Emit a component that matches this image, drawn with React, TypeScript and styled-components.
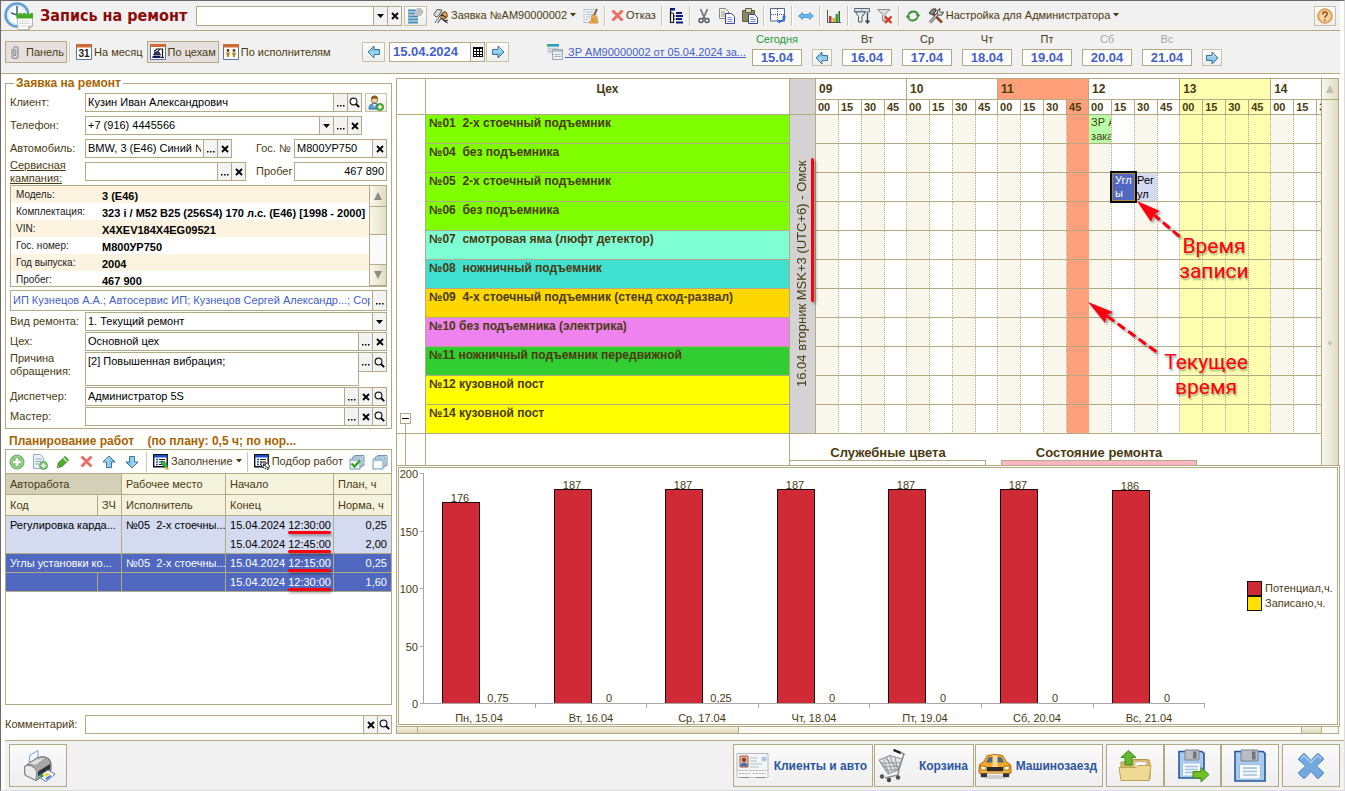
import React from "react";
import styled, { createGlobalStyle, css } from "styled-components";

const UI = `"Liberation Sans", Arial, sans-serif`;
const HEAD = `"DejaVu Sans Condensed", "DejaVu Sans", sans-serif`;
const LINE = "#b3a983";
const INK = "#4a3a10";
const BLUE = "#4560c8";
const BAR = "#f1f1f1";
const RED = "#fa0010";

const GlobalStyle = createGlobalStyle`
  * { box-sizing: border-box; }
  body { margin: 0; background: #fff; font-family: ${UI}; font-size: 11px; line-height: 15px; color: ${INK}; }
  button, input, select, textarea { font: inherit; color: inherit; margin: 0; padding: 0; border-radius: 0; }
  button { cursor: pointer; }
  svg { display: block; flex: none; }
`;

/* ---------- page frame ---------- */

const Page = styled.div`
  min-height: 100vh;
  display: flex;
  flex-direction: column;
  border: 1px solid #dcdcdc;
  border-top-color: #6e6a6c;
  border-left-color: #6e6a6c;
`;

const TopBar = styled.header`
  display: flex;
  align-items: center;
  height: 30px;
  margin-right: 4px;
  padding: 0 4px 0 3px;
  background: ${BAR};
  border-bottom: 1px solid ${LINE};
`;

const Title = styled.h1`
  margin: 0 5px 0 7px;
  width: 151px;
  font: bold 16px/20px ${HEAD};
  color: #8b0a0a;
  white-space: nowrap;
`;

const Tools = styled.div`
  flex: 1;
  display: flex;
  align-items: center;
  gap: 1px;
  margin-left: 3px;
`;

const Separator = styled.span`
  width: 2px;
  height: 20px;
  margin: 0 1px;
  background: #cfc8ac;
  border-right: 1px solid #fff;
`;

const ToolButton = styled.button<{ $on?: boolean }>`
  display: flex;
  align-items: center;
  justify-content: center;
  gap: 2px;
  min-width: 22px;
  height: 22px;
  padding: 0 2px;
  border: 1px solid ${(p) => (p.$on ? LINE : "transparent")};
  background: ${(p) => (p.$on ? "#e6e0e0" : "transparent")};
  white-space: nowrap;
`;

const RaisedButton = styled.button<{ $w: number; $h: number }>`
  display: flex;
  align-items: center;
  justify-content: center;
  width: ${(p) => p.$w}px;
  height: ${(p) => p.$h}px;
  border: 1px solid #c9c2a6;
  background: linear-gradient(#fdfdfd, #eeeeec);
`;

const NavBar = styled.nav`
  display: flex;
  align-items: center;
  height: 43px;
  margin-right: 4px;
  padding-left: 4px;
  background: ${BAR};
  border-bottom: 1px solid ${LINE};
`;

const ViewTabs = styled.div`
  display: flex;
  align-items: center;
  gap: 1px;
  width: 357px;
`;

const DateField = styled.div`
  display: flex;
  width: 96px;
  height: 20px;
  margin-left: 4px;
  margin-right: 1px;
  border: 1px solid ${LINE};
  background: #fff;
`;

const DateInput = styled.input`
  && {
    flex: 1;
    min-width: 0;
    border: 0;
    padding-left: 3px;
    background: none;
    font: bold 13px/16px ${UI};
    color: ${BLUE};
  }
`;

const DocLink = styled.a`
  display: flex;
  align-items: center;
  gap: 2px;
  width: 205px;
  margin-left: 38px;
  color: ${BLUE};
  white-space: pre;
`;

const Week = styled.div`
  display: flex;
  align-items: flex-end;
  align-self: flex-start;
  gap: 10px;
  margin-top: 1px;
`;

const Day = styled.div<{ $tone?: string }>`
  width: 50px;
  height: 34px;
  text-align: center;
  color: ${(p) => p.$tone || INK};
`;

const DayButton = styled.button`
  && {
    display: block;
    width: 50px;
    height: 17px;
    margin-top: 2px;
    border: 1px solid ${LINE};
    background: #fff;
    font: bold 13px/15px ${UI};
    color: ${BLUE};
  }
`;

/* ---------- form ---------- */

const Main = styled.main`
  flex: 1;
  display: flex;
  min-height: 0;
`;

const Side = styled.section`
  display: flex;
  flex-direction: column;
  width: 387px;
  flex: none;
  margin: 1px 4px 6px 4px;
`;

const Group = styled.fieldset`
  margin: 0;
  min-width: 0;
  padding: 2px 4px;
  border: 1px solid ${LINE};
`;

const heading = css`
  font: bold 12px/16px ${UI};
  color: #a86400;
`;

const Legend = styled.legend`
  ${heading}
  margin-left: 4px;
  padding: 0 2px;
`;

const Row = styled.div<{ $gap: number }>`
  display: flex;
  align-items: flex-start;
  margin-bottom: ${(p) => p.$gap}px;
`;

const Label = styled.label<{ $w: number; $link?: boolean; $double?: boolean }>`
  width: ${(p) => p.$w}px;
  flex: none;
  line-height: ${(p) => (p.$double ? 13 : 19)}px;
  height: 19px;
  margin-top: ${(p) => (p.$link ? -3 : 0)}px;
  text-decoration: ${(p) => (p.$link ? "underline" : "none")};
  white-space: ${(p) => (p.$double ? "normal" : "nowrap")};
`;

const Field = styled.div<{ $w?: number; $h?: number; $mr?: number }>`
  display: flex;
  min-width: 0;
  ${(p) => (p.$w ? `width: ${p.$w}px; flex: none;` : "flex: 1;")}
  height: ${(p) => p.$h || 19}px;
  margin-right: ${(p) => p.$mr || 0}px;
  border: 1px solid ${LINE};
  background: #fff;
  color: #000;
`;

const entry = css`
  flex: 1;
  min-width: 0;
  border: 0;
  outline: 0;
  padding: 0 2px;
  background: none;
`;

const Input = styled.input<{ $right?: boolean; $blue?: boolean }>`
  && {
    ${entry}
    text-align: ${(p) => (p.$right ? "right" : "left")};
    color: ${(p) => (p.$blue ? BLUE : "#000")};
  }
`;

const Select = styled.select`
  && {
    ${entry}
    appearance: none;
  }
`;

const Area = styled.textarea`
  && {
    ${entry}
    height: 34px;
    padding: 1px 2px;
    border: 1px solid ${LINE};
    resize: none;
    overflow: hidden;
    color: #000;
  }
`;

const MiniButton = styled.button`
  && {
    display: flex;
    align-items: center;
    justify-content: center;
    flex: none;
    width: 14px;
    border: 0;
    border-left: 1px solid ${LINE};
    background: #f3f3f3;
    color: #000;
  }
`;

const AreaButtons = styled.div`
  display: flex;
  width: 28px;
  height: 20px;
  border: solid ${LINE};
  border-width: 1px 1px 1px 0;

  && > :first-child {
    border-left: 0;
    width: 13px;
  }
`;

const InfoBox = styled.div`
  display: flex;
  height: 102px;
  margin-bottom: 3px;
  border: 1px solid ${LINE};
  overflow: hidden;
`;

const InfoTable = styled.table`
  flex: 1;
  border-collapse: collapse;
  font: 10px/12px ${UI};
  color: #222;

  tr:nth-child(odd) { background: #fdf3e1; }
  th { width: 85px; height: 17px; padding: 1px 0 0 5px; text-align: left; font-weight: normal; }
  td { padding: 2px 0 0 6px; font-weight: bold; font-size: 11px; color: #000; white-space: nowrap; }
`;

const Scroll = styled.div<{ $w: number }>`
  width: ${(p) => p.$w}px;
  flex: none;
  display: flex;
  flex-direction: column;
  background: #fafafa;
  border-left: 1px solid ${LINE};
`;

const ScrollArrow = styled.button<{ $h: number }>`
  display: flex;
  align-items: center;
  justify-content: center;
  flex: none;
  width: 100%;
  height: ${(p) => p.$h}px;
  border: 0;
  border-bottom: 1px solid ${LINE};
  background: linear-gradient(90deg, #f9f8ee, #e0dbc2);
`;

const ScrollThumb = styled.div`
  flex: 0 0 28px;
  background: linear-gradient(90deg, #f8f6ea, #e4dfc4);
  border-bottom: 1px solid ${LINE};
`;

const ScrollGap = styled.div`
  flex: 1;
  border-bottom: 1px solid ${LINE};
`;

const ScrollBody = styled.div`
  flex: 1;
  display: flex;
  align-items: center;
  justify-content: center;
  padding-top: 120px;
  background: linear-gradient(90deg, #f9f8ee, #e0dbc2);

  &::after {
    content: "";
    width: 4px;
    height: 4px;
    border-radius: 2px;
    background: #c9c4b0;
  }
`;

/* ---------- work planning ---------- */

const PlanTitle = styled.h2`
  ${heading}
  margin: 0;
  padding: 4px 4px 0;
  height: 20px;
  white-space: pre;
`;

const PlanBox = styled.div`
  flex: 1;
  border: 1px solid ${LINE};
  margin-bottom: 10px;
`;

const PlanTools = styled.div`
  display: flex;
  align-items: center;
  gap: 1px;
  height: 24px;
  border-bottom: 1px solid ${LINE};

  ${Separator} {
    margin: 0 2px;
  }
`;

const PlanTable = styled.table`
  width: 100%;
  table-layout: fixed;
  border-collapse: separate;
  border-spacing: 0;

  th, td {
    height: 19px;
    padding: 0 4px;
    border-right: 1px solid ${LINE};
    border-bottom: 1px solid ${LINE};
    text-align: left;
    font-weight: normal;
    white-space: pre;
  }
  th { height: 21px; background: #f5f2de; }
  th.current { background: #d3cfb9; }
  th:last-child, td:last-child { border-right: 0; }
  td.num { text-align: right; }
`;

const WorkRow = styled.tr<{ $selected?: boolean; $open?: boolean }>`
  background: ${(p) => (p.$selected ? "#5068c0" : "#d4daf0")};
  color: ${(p) => (p.$selected ? "#fff" : "#000")};

  && td { border-bottom-color: ${(p) => (p.$open ? "transparent" : LINE)}; }
`;

const Marked = styled.span`
  position: relative;

  &::after {
    content: "";
    position: absolute;
    left: 0;
    right: 0;
    bottom: -3px;
    height: 3px;
    border-radius: 2px;
    background: ${RED};
    box-shadow: 1px 2px 3px rgba(0, 0, 0, 0.35);
  }
`;

/* ---------- schedule ---------- */

const Board = styled.section`
  flex: 1;
  min-width: 0;
  display: flex;
  flex-direction: column;
  margin: 4px 4px 6px 0;
`;

const Sheet = styled.div`
  position: relative;
  flex: 1 1 386px;
  min-height: 0;
  display: flex;
  margin-right: 1px;
  border: 1px solid ${LINE};
  border-bottom: 0;
  overflow: hidden;
`;

const SheetView = styled.div`
  flex: 1 1 0;
  min-width: 0;
  overflow: hidden;
  display: flex;
  flex-direction: column;
`;

const Schedule = styled.table`
  width: 1014px;
  flex: none;
  table-layout: fixed;
  border-collapse: separate;
  border-spacing: 0;
  font: 11px/14px ${UI};

  th, td {
    padding: 0;
    border-right: 1px solid ${LINE};
    border-bottom: 1px solid ${LINE};
    text-align: left;
    vertical-align: top;
    overflow: hidden;
  }
`;

const ShopHead = styled.th`
  && { text-align: center; font: bold 12px/20px ${UI}; }
`;

const HourHead = styled.th<{ $bg: string }>`
  && { height: 21px; padding-left: 3px; background: ${(p) => p.$bg}; font: bold 12px/20px ${UI}; }
`;

const MinuteHead = styled.th<{ $bg: string }>`
  && { height: 15px; padding-left: 2px; background: ${(p) => p.$bg}; font: bold 11px/14px ${UI}; white-space: nowrap; }
`;

const ShopCell = styled.th<{ $bg: string }>`
  && { height: 29px; padding: 1px 0 0 3px; background: ${(p) => p.$bg}; font: bold 12px/15px ${UI}; white-space: pre; }
`;

const ZoneCell = styled.td`
  && { background: #d3d3d3; vertical-align: middle; }
`;

const ZoneText = styled.div`
  display: flex;
  align-items: center;
  justify-content: center;
  height: 318px;
  writing-mode: vertical-rl;
  transform: rotate(180deg);
  font: 13px/23px ${UI};
  white-space: nowrap;
`;

const ZoneMark = styled.span`
  position: absolute;
  left: 414px;
  top: 79px;
  width: 3px;
  height: 144px;
  border-radius: 2px;
  background: ${RED};
  box-shadow: 2px 2px 3px rgba(0, 0, 0, 0.35);
`;

const GutterCell = styled.td`
  && { vertical-align: bottom; }
`;

const Fold = styled.div`
  display: flex;
  flex-direction: column;
  align-items: center;
  width: 11px;
  margin-left: 3px;
`;

const FoldButton = styled.button`
  display: flex;
  align-items: center;
  justify-content: center;
  width: 11px;
  height: 11px;
  border: 1px solid ${LINE};
  background: #fff;
`;

const FoldLine = styled.span<{ $h?: number }>`
  width: 1px;
  ${(p) => (p.$h ? `height: ${p.$h}px;` : "flex: 1;")}
  background: ${LINE};
`;

const Slot = styled.td<{ $bg: string }>`
  && {
    background: ${(p) => p.$bg};
    border-right-style: dotted;
    ${(p) => p.$bg === "#ffa07a" && "border-right-color: #ffa07a;"}
  }
`;

const ActiveSlot = styled(Slot)`
  && { overflow: visible; }
`;

const Booking = styled.div<{ $kind: "done" | "active" | "plain" }>`
  height: 28px;
  padding-left: 2px;
  overflow: hidden;
  word-break: break-all;
  ${(p) => p.$kind === "done" && "background: #b8ffa8; white-space: pre;"}
  ${(p) => p.$kind === "plain" && "background: #d4daf0; color: #000;"}
  ${(p) =>
    p.$kind === "active" &&
    "position: relative; width: 23px; padding-left: 2px; background: #5068c0; color: #fff; border: 1px solid #b08a3a; box-shadow: 0 0 0 2px #0a0a14; line-height: 13px;"}
`;

const Below = styled.div`
  flex: 1;
  display: flex;
`;

const BelowCell = styled.div<{ $w: number }>`
  width: ${(p) => p.$w}px;
  flex: none;
  display: flex;
  border-right: 1px solid ${LINE};
`;

const Key = styled.div<{ $bg: string }>`
  width: 196px;
  margin-right: 15px;
  flex: none;
  display: flex;
  flex-direction: column;
  padding-top: 11px;
  text-align: center;
  font: bold 13px/15px ${UI};

  &::after {
    content: "";
    flex: 1;
    background: ${(p) => p.$bg};
    border: 1px solid ${LINE};
    border-left-width: ${(p) => (p.$bg === "#fff" ? 0 : 1)}px;
    border-bottom: 0;
  }
`;

const Note = styled.p<{ $x: number; $y: number }>`
  position: absolute;
  left: ${(p) => p.$x}px;
  top: ${(p) => p.$y}px;
  margin: 0;
  width: 100px;
  text-align: center;
  font: 21px/25px Roboto, sans-serif;
  color: ${RED};
  text-shadow: 1px 2px 2px rgba(0, 0, 0, 0.35);
`;

const Arrows = styled.svg`
  position: absolute;
  left: 690px;
  top: 120px;
  filter: drop-shadow(2px 2px 1px rgba(0, 0, 0, 0.35));
`;

const ChartPanel = styled.div`
  flex: none;
  display: flex;
  justify-content: space-between;
  border: 3px double ${LINE};
  background: #fff;
`;

const Legends = styled.ul`
  list-style: none;
  align-self: center;
  width: 90px;
  margin: 0;
  padding: 0;
`;

const LegendItem = styled.li<{ $c: string }>`
  display: flex;
  align-items: center;
  gap: 3px;
  white-space: nowrap;

  &::before {
    content: "";
    flex: none;
    width: 13px;
    height: 13px;
    background: ${(p) => p.$c};
    border: 1px solid #111;
  }
`;

const HScroll = styled.div`
  display: flex;
  height: 7px;
  margin-right: 1px;
  border: solid ${LINE};
  border-width: 0 1px 1px;
  background: #faf9f3;
`;

const HPart = styled.span<{ $w: number; $auto?: boolean }>`
  width: ${(p) => p.$w}px;
  margin-left: ${(p) => (p.$auto ? "auto" : 0)};
  margin-right: ${(p) => (p.$auto ? "16px" : 0)};
  border-right: 1px solid ${LINE};
  border-left: ${(p) => (p.$auto ? `1px solid ${LINE}` : 0)};
  background: linear-gradient(#f5f2de, #ddd8ba);
`;

/* ---------- footer ---------- */

const Footer = styled.footer`
  display: flex;
  align-items: center;
  height: 50px;
  margin-left: 4px;
  padding: 0 4px;
  background: ${BAR};
  border-top: 1px solid ${LINE};
`;

const BigButton = styled.button<{ $w: number; $mr?: number }>`
  && {
    display: flex;
    align-items: center;
    justify-content: ${(p) => (p.$w > 60 ? "space-between" : "center")};
    width: ${(p) => p.$w}px;
    height: 43px;
    margin-right: ${(p) => p.$mr || 0}px;
    padding: 0 ${(p) => (p.$w > 60 ? "5px 0 2px" : "0")};
    border: 1px solid ${LINE};
    background: linear-gradient(#fafafa, #efefef);
    font: bold 12px/16px ${UI};
    color: #2a55a0;
    white-space: nowrap;
  }
`;

const Spacer = styled.span`
  flex: 1;
`;

/* ---------- icons ---------- */

const Ic = ({ s = 16, children }: { s?: number; children: React.ReactNode }) => (
  <svg width={s} height={s} viewBox={`0 0 ${s} ${s}`} aria-hidden="true">{children}</svg>
);

const Caret = () => (
  <svg width="7" height="4" viewBox="0 0 7 4" aria-hidden="true"><path d="M0 0h7L3.500 4z" fill="currentColor" /></svg>
);
const MenuCaret = () => (
  <svg width="7" height="5" viewBox="0 0 7 5" aria-hidden="true"><path d="M1 0h6L4 3.500z" fill="currentColor" /></svg>
);
const Cross = () => (
  <svg width="8" height="8" viewBox="0 0 8 8" aria-hidden="true"><path d="M1 1l6 6M7 1L1 7" stroke="#000" strokeWidth="1.800" /></svg>
);
const Dots = () => (
  <svg width="8" height="8" viewBox="0 0 8 8" aria-hidden="true"><path d="M0 6h1.500v1.500H0zM3 6h1.500v1.500H3zM6 6h1.500v1.500H6z" fill="#000" /></svg>
);
const Lens = () => (
  <svg width="11" height="11" viewBox="0 0 11 11" aria-hidden="true">
    <circle cx="4.500" cy="4.500" r="3.400" fill="#fff" stroke="#222" strokeWidth="1.200" />
    <path d="M7 7l3.200 3.200" stroke="#000" strokeWidth="1.800" />
  </svg>
);
const Grid = () => (
  <svg width="10" height="10" viewBox="0 0 10 10" aria-hidden="true">
    <path d="M0 0h10v10H0z" />
    <path d="M1 2h2v2H1zM4 2h2v2H4zM7 2h2v2H7zM1 5h2v2H1zM4 5h2v2H4zM7 5h2v2H7zM1 8h2v1H1zM4 8h2v1H4zM7 8h2v1H7z" fill="#fff" />
  </svg>
);
const Tri = ({ up, faint }: { up?: boolean; faint?: boolean }) => (
  <svg width="8" height="8" viewBox="0 0 8 8" aria-hidden="true">
    <path d={up ? "M4 0l4 8H0z" : "M4 8l4-8H0z"} fill={faint ? "#c2beb0" : "#8f8c82"} />
  </svg>
);
const ArrowIcon = ({ dir }: { dir: "left" | "right" | "up" | "down" }) => {
  const turn = { right: 0, down: 90, left: 180, up: 270 }[dir];
  return (
    <Ic s={14}>
      <defs>
        <linearGradient id={`ar-${dir}`} x1="0" y1="0" x2="0" y2="1">
          <stop offset="0" stopColor="#c5ecfb" />
          <stop offset="1" stopColor="#5db0de" />
        </linearGradient>
      </defs>
      <path transform={`rotate(${turn} 7 7)`} d="M1.500 4.500H7V1l6 6-6 6V9.500H1.500z" fill={`url(#ar-${dir})`} stroke="#3f7096" />
    </Ic>
  );
};
const ClockCalendar = () => (
  <Ic s={29}>
    <circle cx="13" cy="14" r="11.500" fill="#e9f4fc" stroke="#5d9fd4" strokeWidth="2.500" />
    <circle cx="13" cy="14" r="9.300" fill="#f8fcff" stroke="#bcd8ee" strokeWidth=".8" />
    <path d="M13 5v9l-6-2M13 14l4 3" stroke="#465e78" strokeWidth="1.500" fill="none" />
    <path d="M13 14h15.500v11l-4 3.500H14z" fill="#fff" stroke="#aaa" strokeWidth=".8" />
    <path d="M12.500 12h16.500v5.500H12.500z" fill="#45a828" />
    <path d="M15 11v2.500M18.500 11v2.500M22 11v2.500M25.500 11v2.500" stroke="#d6e9d0" />
    <path d="M15.500 20h11M15.500 22.500h11M15.500 25h8" stroke="#bbb" strokeDasharray="1.500 1" />
    <path d="M24.500 28.500V25h4z" fill="#d5d5d5" stroke="#999" strokeWidth=".6" />
  </Ic>
);
const ListGear = () => (
  <Ic s={17}>
    <path d="M2 3.500h7M2 6.500h6M2 9.500h9M2 12.500h9M2 15.500h9" stroke="#4a8ab8" strokeWidth="1.800" />
    <path d="M1.500 2v15" stroke="#7eb3d6" />
    <circle cx="12" cy="5" r="3.200" fill="#e6e6e6" stroke="#a8a8a8" strokeWidth="1.800" strokeDasharray="1.700 .8" />
    <circle cx="12" cy="5" r="1.300" fill="#fff" stroke="#999" />
  </Ic>
);
const WrenchHand = () => (
  <Ic>
    <path d="M.8 6.500L4 1.500l5 .5-3.500 6-2.500 1z" fill="#dcdcdc" stroke="#555" />
    <path d="M2 14.500L10.500 4M4.500 15L13 4" stroke="#444" strokeWidth="1.100" />
    <path d="M3 14L11.500 4" stroke="#e4e4e4" />
    <path d="M8 8l3-4.500 2.500 1 1 4-2.500 2.500-4-.5z" fill="#eda24e" stroke="#5d3a10" strokeWidth=".9" />
    <path d="M9 11l5.500 4M8 6.500l5.500 3M11 13l4-1" stroke="#222" strokeWidth="1.100" />
  </Ic>
);
const Broom = () => (
  <Ic>
    <path d="M1 1.500h12v13H1z" fill="#eef5fb" stroke="#b2c6d6" />
    <path d="M3 4h7M3 6.500h5M3 9h4M3 11.500h2" stroke="#a9bfd2" />
    <path d="M14 1l-3 6" stroke="#8b5a22" strokeWidth="1.800" />
    <path d="M9 6.500l4.500 2 1.500 6.500H6q3-3 3-8.500z" fill="#f0b851" stroke="#cf933c" />
    <path d="M9 14l1.500-5M12 14.500l0-4.500" stroke="#c98b2a" />
  </Ic>
);
const RedX = () => (
  <svg width="13" height="13" viewBox="0 0 13 13" aria-hidden="true">
    <path d="M1 2.500L2.500 1l4 4 4-4L12 2.500l-4 4 4 4-1.500 1.500-4-4-4 4L1 10.500l4-4z" fill="#ee7064" stroke="#d9584c" strokeWidth=".8" />
  </svg>
);
const Tree = () => (
  <Ic>
    <path d="M2 0h5v2.500H2zM8 4h6v2H8zM8 7h7v2H8zM8 10h6v2H8zM8 13.500h7v2H8z" fill="#0a1a80" />
    <path d="M2.500 2v12.500H6M2.500 5H5" fill="none" stroke="#111" strokeWidth="1.200" />
    <path d="M5.500 5v10M5.500 8h2M5.500 11h2" stroke="#111" />
  </Ic>
);
const Scissors = () => (
  <Ic>
    <path d="M4.500 1l4.500 10M11.500 1L7 11" stroke="#6d7278" strokeWidth="1.700" />
    <circle cx="5" cy="12.500" r="2" fill="none" stroke="#54595f" strokeWidth="1.500" />
    <circle cx="11" cy="12.500" r="2" fill="none" stroke="#54595f" strokeWidth="1.500" />
  </Ic>
);
const Copy = () => (
  <Ic>
    <path d="M.5.5h6l3 3v7h-9z" fill="#f2f0e6" stroke="#8c897a" />
    <path d="M2 4h4M2 6h5M2 8h5" stroke="#a09c88" />
    <path d="M6.500 5.500h6l3 3v7h-9z" fill="#fff" stroke="#34449c" />
    <path d="M8.500 9.500h4M8.500 11.500h5M8.500 13.500h5" stroke="#7b88c8" />
  </Ic>
);
const Paste = () => (
  <Ic>
    <path d="M.5 2.500h12v11H.5z" fill="#8a8a60" stroke="#606040" />
    <path d="M3.500.5h6v4h-6z" fill="#d6d4bb" stroke="#606040" />
    <path d="M6.500 6.500h6l3 3v6h-9z" fill="#fff" stroke="#34449c" />
    <path d="M8.500 9.500h3M8.500 11.500h5M8.500 13.500h5" stroke="#7b88c8" />
  </Ic>
);
const GridSync = () => (
  <Ic>
    <path d="M.5.5h14v12.500H.5z" fill="#f8f9fc" stroke="#5a6480" />
    <path d="M7.500 1v12M1 6.500h13" stroke="#5a6480" strokeDasharray="1 1" />
    <path d="M14 9q0 4.500-5 4.500" stroke="#1e62d8" strokeWidth="1.500" fill="none" />
    <path d="M14 6.500l2 3h-4zM7 13.500l3-2v4z" fill="#1e62d8" />
  </Ic>
);
const Stretch = () => (
  <Ic>
    <path d="M.5 8L4.500 4.500v2h7v-2l4 3.500-4 3.500v-2h-7v2z" fill="#6cb6f0" stroke="#3f8fd2" strokeWidth=".8" />
  </Ic>
);
const Bars = () => (
  <Ic>
    <path d="M1.500 2v12.500H15" fill="none" stroke="#555" />
    <path d="M3 8h2.500v6H3z" fill="#c03a2e" />
    <path d="M6.500 10H9v4H6.500z" fill="#d8b320" />
    <path d="M9.500 6H12v8H9.500z" fill="#3b9a3a" />
    <path d="M12.500 3H14v11h-1.500z" fill="#276b2a" />
  </Ic>
);
const FilterCog = () => (
  <Ic>
    <path d="M.5.500h15v3.500h-15z" fill="#dce2ea" stroke="#5c6674" />
    <path d="M1.500 4h9.500L8 8.500V14H4.500V8.500z" fill="#e9edf2" stroke="#4c5664" />
    <path d="M13.500 5v10M11.500 12.500l2 2.500 2-2.500" fill="none" stroke="#38424e" strokeWidth="1.300" />
    <path d="M7 2l4 3-2 3" fill="#c4d0de" stroke="#4c5664" strokeWidth=".8" />
  </Ic>
);
const FilterX = () => (
  <Ic>
    <path d="M.5 1.500h12.500L8 6.500V13H5.500V6.500z" fill="#dcdcdc" stroke="#8a8a8a" />
    <path d="M8 8.500l6.500 6.500M14.500 8.500L8 15" stroke="#dc2c22" strokeWidth="2.200" />
  </Ic>
);
const Refresh = () => (
  <Ic>
    <path d="M3.500 6.500Q5 3.500 8.500 3.500T13 7M12.500 9.500Q11 12.500 7.500 12.500T3 9" fill="none" stroke="#3a9437" strokeWidth="1.800" />
    <path d="M15.500 6.500h-5L13 10zM.5 9.500h5L3 6z" fill="#3a9437" />
  </Ic>
);
const HammerWrench = () => (
  <Ic>
    <path d="M4 4.500l10 10" stroke="#8b4a1c" strokeWidth="2.600" />
    <path d="M1 5l3.500-4H8v2L4 7z" fill="#888" stroke="#333" />
    <path d="M2 14.500l8-9" stroke="#555" strokeWidth="3" />
    <path d="M2 14.500l8-9" stroke="#ccc" strokeWidth="1.200" />
    <path d="M9 5.500q0-4 3-5l-.5 2.500L13 4.500l2.500-.5q-.5 3.500-4 3.500z" fill="#d2d5d8" stroke="#444" />
  </Ic>
);
const Help = () => (
  <Ic>
    <circle cx="8" cy="8" r="7.200" fill="#f5b36a" stroke="#cf8a3e" />
    <circle cx="8" cy="8" r="5.500" fill="#fbe3c0" opacity=".7" />
    <path d="M5.800 6.500q0-2.500 2.200-2.500t2.200 2q0 1-1.200 1.800T8 9.800M8 11.200v1.500" fill="none" stroke="#8b4a14" strokeWidth="1.400" />
  </Ic>
);
const Clip = () => (
  <Ic>
    <path d="M4 5v6.500a3 3 0 0 0 6 0V4a2.200 2.200 0 0 0-4.200 0v6.500a1 1 0 0 0 2 0V5" fill="none" stroke="#888" strokeWidth="1.100" />
  </Ic>
);
const MonthIcon = () => (
  <Ic>
    <path d="M.5 1h15v14.500H.5z" fill="#fff" stroke="#5577a5" />
    <path d="M0 0h16v3.500H0z" fill="#cf6a34" />
    <text x="8" y="13" textAnchor="middle" fontFamily="Liberation Sans" fontWeight="bold" fontSize="10" fill="#222">31</text>
  </Ic>
);
const LiftIcon = () => (
  <Ic>
    <path d="M.5 1h15v14.500H.5z" fill="#fff" stroke="#5577a5" />
    <path d="M0 0h16v3H0z" fill="#cf6a34" />
    <path d="M2.500 12h8v2h-8z" fill="#15155a" />
    <path d="M3.500 11l1.500-3h4l1.500 3z" fill="#3a3a8a" stroke="#111" strokeWidth=".8" />
    <path d="M4 7.500l3-2.500h5M7.500 8l2-2.500M12.500 4.500v8.500M10.500 13.500h3.500" stroke="#111" strokeWidth="1.200" fill="none" />
  </Ic>
);
const StaffIcon = () => (
  <Ic>
    <path d="M.5 1h15v14.500H.5z" fill="#fff" stroke="#5577a5" />
    <path d="M0 0h16v3.500H0z" fill="#cf6a34" />
    <circle cx="5" cy="6.500" r="1.400" fill="#5a430c" />
    <circle cx="11" cy="6.500" r="1.400" fill="#5a430c" />
    <path d="M3 8.500h4L5.800 13h-1.600zM9 8.500h4L11.800 13h-1.600z" fill="#b08a1e" />
  </Ic>
);
const DocStack = () => (
  <Ic>
    <path d="M0 .5h12v10H0z" fill="#dfe7ec" />
    <path d="M0 0h12v2.500H0z" fill="#2c97c8" />
    <path d="M0 0h2v2.500H0z" fill="#38c038" />
    <path d="M1 5h10M1 7.500h10" stroke="#a9b4ba" />
    <path d="M5.500 5.500h10v10h-10z" fill="#eef1f2" stroke="#9aa6ac" />
    <path d="M6 6h9v2H6z" fill="#b9c5cb" />
    <path d="M7 10.500h7M7 12.500h7" stroke="#a9b4ba" />
  </Ic>
);
const UserAdd = () => (
  <Ic>
    <path d="M1 14q0-5.500 5.500-5.500T12 14z" fill="#5f9ddb" stroke="#2e6aa8" />
    <path d="M5 9l1.500 3L8 9z" fill="#fff" />
    <circle cx="6.500" cy="4.800" r="3.200" fill="#f4cfa0" stroke="#9c6a32" strokeWidth=".8" />
    <path d="M3 4.500q0-4 3.500-4T10 4.500Q8 2.500 3 4.500z" fill="#8b5420" />
    <circle cx="12" cy="12" r="3.600" fill="#55b435" stroke="#2f8518" strokeWidth=".8" />
    <path d="M12 10v4M10 12h4" stroke="#fff" strokeWidth="1.300" />
  </Ic>
);
const PlusBall = () => (
  <Ic>
    <circle cx="8" cy="8" r="7" fill="#7cc470" stroke="#6aa561" />
    <circle cx="8" cy="8" r="5.800" fill="none" stroke="#a9d8a0" />
    <path d="M8 4v8M4 8h8" stroke="#fff" strokeWidth="2.600" />
  </Ic>
);
const PageAdd = () => (
  <Ic>
    <path d="M1.500.5h7l3 3v11h-10z" fill="#eaf2f8" stroke="#8fabbf" />
    <path d="M3.500 5h6M3.500 7.500h6M3.500 10h4" stroke="#8fabbf" />
    <circle cx="11.500" cy="11.500" r="4" fill="#7cc470" stroke="#5d9c54" strokeWidth=".8" />
    <path d="M11.500 9.200v4.600M9.200 11.500h4.600" stroke="#fff" strokeWidth="1.500" />
  </Ic>
);
const Pencil = () => (
  <Ic>
    <path d="M2.500 13.500l1-4.500 6.500-6.500 3.500 3.500-6.500 6.500z" fill="#4cb02a" stroke="#2f7d18" />
    <path d="M8.500 4l3.500 3.500" stroke="#d6f0ca" strokeWidth="1.500" />
    <path d="M2 14l1-3 2 2z" fill="#e8e0c0" stroke="#3a7a24" strokeWidth=".6" />
  </Ic>
);
const FillIcon = ({ pick }: { pick?: boolean }) => (
  <Ic>
    <path d="M.7.7h13.500v12H.7z" fill="#fff" stroke="#111" strokeWidth="1.400" />
    <path d="M1 1h13v2.500H1z" fill="#1d50d0" />
    <path d="M3 5.500h2M3 8h2M3 10.500h2" stroke="#1d50d0" strokeWidth="1.500" />
    <path d="M6 5.500h6M6 8h6M6 10.500h4" stroke="#222" />
    {pick ? (
      <>
        <path d="M7 8l3 1 4 .5 1.500 3-1.500 3-4-1.500-3-3z" fill="#fff" stroke="#222" strokeWidth="1.200" strokeDasharray="1.500 .8" />
        <path d="M9 10l5 4M9 12l3-2" stroke="#222" />
      </>
    ) : (
      <>
        <path d="M8 7l3 .5 4 4.500-2 2-4.500-4z" fill="#35b44a" stroke="#147a24" strokeWidth=".8" />
        <path d="M12 13.500l3.500 2" stroke="#d8b320" strokeWidth="1.800" />
      </>
    )}
  </Ic>
);
const Checks = ({ on }: { on?: boolean }) => (
  <Ic>
    <path d="M5.500 1.500h9.500v10H5.500z" fill="#e9f2f9" stroke="#6f97b5" />
    <path d="M3.500 3h9.500v10H3.500z" fill="#e9f2f9" stroke="#6f97b5" />
    <path d="M1 5h10v10H1z" fill="#f6fafd" stroke="#6f97b5" />
    <path d="M1.500 5.500h9v1.500h-9z" fill="#9cc0da" />
    {on && <path d="M2.500 9.500L5.500 12.500 11 6.500" fill="none" stroke="#36a21d" strokeWidth="2.400" />}
  </Ic>
);
const Printer = () => (
  <Ic s={34}>
    <path d="M8 13L9 6l8-4.500V11z" fill="#eef6ff" stroke="#7fa5d6" />
    <path d="M3.500 17.500L16 9q7-3 12 1l2 4v7L15 31.500 4 26z" fill="#a8a8a8" stroke="#5c5c5c" />
    <path d="M3.500 17.500q3-2 7-.5 4 2 5 5.500l-.5 9L4 26z" fill="#ececec" stroke="#808080" />
    <path d="M6 15.500L16 9.500q6-2.500 9 0l-10 7.500q-3-2.500-9-1.500z" fill="#c9c9c9" stroke="#888" strokeWidth=".7" />
    <path d="M10 14.500l7-4M12 15.500l8-5" stroke="#f4f4f4" />
    <path d="M17 22.500l12-7.500v5l-12 8z" fill="#333" />
    <path d="M17 27.500l10-6.500 7 4-9 7.500z" fill="#fff" stroke="#5577bb" />
    <path d="M18 27l4-2.500.5 3-2 1.500z" fill="#28a03c" />
    <path d="M22.500 26l4-2.500 2.500 1.500-4 3z" fill="#f4d12c" />
    <path d="M24 29.500l5-3.500 1.500 1-4.500 4z" fill="#4d7fd0" />
  </Ic>
);
const IdCard = () => (
  <Ic s={33}>
    <path d="M1 4.500h31v17H1z" fill="#f3f5f7" stroke="#b4b8bc" />
    <path d="M4 7h8v11H4z" fill="#f2b9a8" stroke="#b0553c" />
    <circle cx="8" cy="10.800" r="2.200" fill="#7a4a2c" />
    <path d="M4.500 17.500q0-4 3.500-4t3.500 4z" fill="#3f6fb5" />
    <path d="M14 9h8M14 12h7M14 15h12M14 18h9" stroke="#b4c0cc" />
    <circle cx="28" cy="10" r="2.500" fill="#a9c6e8" />
    <path d="M1 21.500h31v7H1z" fill="#f8f8f8" stroke="#c4c4c4" />
    <path d="M3 24.500h11M17 24.500h13" stroke="#aaa" strokeDasharray="2 1" />
    <path d="M4 28.500h9M20 28.500h9" stroke="#8a8a8a" strokeWidth="1.200" />
  </Ic>
);
const Cart = () => (
  <Ic s={34}>
    <path d="M17 1l10 4-5 15-1 6-13 3" fill="none" stroke="#8a8a8a" strokeWidth="1.500" />
    <path d="M16.500 1l7 2.800" stroke="#222" strokeWidth="2.400" />
    <path d="M2 11l11-4.500 12 3.500-4 11-10 4z" fill="#e2e4e6" stroke="#8a8e92" />
    <path d="M4 14.500l19.500-1M6 18l16-1M8 21.500l13-1M6 9.500l6 15M9.500 8l6 15M13 6.500l5.500 15M18 8l2.500 13M8 9l14 10M3 12l9 11" stroke="#8a8e92" strokeWidth=".8" fill="none" />
    <circle cx="5" cy="27.500" r="2.200" fill="#555" />
    <circle cx="12" cy="31" r="2.200" fill="#444" />
    <circle cx="21" cy="28.500" r="2.200" fill="#555" />
  </Ic>
);
const Car = () => (
  <Ic s={34}>
    <ellipse cx="17" cy="28" rx="15" ry="2" fill="#ccc" />
    <path d="M2 20h7v8H3zM25 20h7l-1 8h-6z" fill="#333" />
    <path d="M9.500 6.500Q17 4.500 24.500 6.500L28.500 13q4.500 1.500 4.500 5v6H1v-6q0-3.500 4.500-5z" fill="#f5a62c" stroke="#b66a0c" />
    <path d="M10.500 8.500q6.500-1.500 13 0l2.500 5H8z" fill="#4a6a8a" />
    <path d="M14.500 6h5v12h-5z" fill="#fbd98c" />
    <path d="M9 18h16v4.500H9z" fill="#2a2a2a" />
    <path d="M2.500 17l5.500 .5v3.500H3zM31.500 17l-5.500 .5v3.500h5z" fill="#fff4cf" stroke="#8a5208" strokeWidth=".7" />
    <path d="M3 23h28" stroke="#fbd07c" />
  </Ic>
);
const FolderUp = () => (
  <Ic s={34}>
    <path d="M3 13h10l2-2.500h14q3 0 3 3V30H3z" fill="#d9b866" stroke="#b39548" />
    <path d="M17 13h11v5H17z" fill="#fff" stroke="#ccc" />
    <path d="M1 18.500h17l2-2h13L31 31.500H3z" fill="#efd993" stroke="#bfa252" />
    <path d="M10.500 1.500l7.500 7h-4V16H7V8.500H3z" fill="#62b82e" stroke="#3c8a14" />
  </Ic>
);
const Floppy = ({ go }: { go?: boolean }) => (
  <Ic s={34}>
    <path d={go ? "M3 2.500h23l2 2V29H3z" : "M2 2.500h28l2 2V32H2z"} fill="#a9cbee" stroke="#27579a" strokeWidth="1.600" />
    <path d={go ? "M9 1h14v10H9z" : "M8 1h17v11H8z"} fill="#b9bdc2" stroke="#7c8187" />
    <path d={go ? "M17 2.500h3.500v7H17z" : "M19 2.500h3.500v8H19z"} fill="#6d757e" />
    <path d={go ? "M6.500 14h18v13h-18z" : "M6.500 15.500h21v14.500h-21z"} fill="#f7fbff" stroke="#9dbde0" />
    <path d={go ? "M9 17.500h13M9 20.500h13M9 23.500h8" : "M10 19h14M10 22.500h14M10 26h14"} stroke="#9fc0e4" strokeWidth="1.300" />
    {go && <path d="M17 22.500h8v-4l8 7-8 7.500v-4h-8z" fill="#6fc023" stroke="#3f8a12" />}
  </Ic>
);
const BigX = () => (
  <Ic s={30}>
    <path d="M3 7l4-4q1-1 2 0l6 6.500L21 3q1-1 2 0l4 4q1 1 0 2l-6.500 6L27 21q1 1 0 2l-4 4q-1 1-2 0l-6-6.500L9 27q-1 1-2 0l-4-4q-1-1 0-2l6.500-6L3 9q-1-1 0-2z" fill="#74a9e0" stroke="#5688c2" strokeLinejoin="round" />
    <path d="M5 7.500l3-3 7 7 7-7 3 3" fill="none" stroke="#a9cbee" strokeWidth="1.500" />
  </Ic>
);

/* ---------- data ---------- */

const info = [
  ["Модель:", "3 (E46)"],
  ["Комплектация:", "323 i / M52 B25 (256S4) 170 л.с. (E46) [1998 - 2000]"],
  ["VIN:", "X4XEV184X4EG09521"],
  ["Гос. номер:", "М800УР750"],
  ["Год выпуска:", "2004"],
  ["Пробег:", "467 900"],
];

const shops = [
  ["№01  2-х стоечный подъемник", "#80ff00"],
  ["№04  без подъемника", "#80ff00"],
  ["№05  2-х стоечный подъемник", "#80ff00"],
  ["№06  без подъемника", "#80ff00"],
  ["№07  смотровая яма (люфт детектор)", "#7fffd4"],
  ["№08  ножничный подъемник", "#40e0d0"],
  ["№09  4-х стоечный подъемник (стенд сход-развал)", "#ffd700"],
  ["№10 без подъемника (электрика)", "#ee82ee"],
  ["№11 ножничный подъемник передвижной", "#32cd32"],
  ["№12 кузовной пост", "#ffff00"],
  ["№14 кузовной пост", "#ffff00"],
];

const hours = ["09", "10", "11", "12", "13", "14"];
const minutes = ["00", "15", "30", "45"];
const slots = hours.flatMap((h) => minutes.map((m) => ({ h, m }))).slice(0, 23);

const hourBg = (h: string) => (h === "11" ? "#ffa07a" : h === "13" ? "#ffffb0" : "#fff");
const minuteBg = (h: string, m: string) => (h === "13" ? "#ffffb0" : h === "11" && m === "45" ? "#ffa07a" : "#fff");
const slotBg = (h: string, m: string) => {
  const bg = minuteBg(h, m);
  return bg === "#fff" && (m === "00" || m === "30") ? "#faf8ec" : bg;
};

const days = [
  ["Вт", "16.04"],
  ["Ср", "17.04"],
  ["Чт", "18.04"],
  ["Пт", "19.04"],
  ["Сб", "20.04"],
  ["Вс", "21.04"],
];

const load = [
  { day: "Пн, 15.04", potential: 176, booked: "0,75" },
  { day: "Вт, 16.04", potential: 187, booked: "0" },
  { day: "Ср, 17.04", potential: 187, booked: "0,25" },
  { day: "Чт, 18.04", potential: 187, booked: "0" },
  { day: "Пт, 19.04", potential: 187, booked: "0" },
  { day: "Сб, 20.04", potential: 187, booked: "0" },
  { day: "Вс, 21.04", potential: 186, booked: "0" },
];

/* ---------- parts ---------- */

const More = () => <MiniButton type="button" aria-label="Выбрать"><Dots /></MiniButton>;
const Clear = () => <MiniButton type="button" aria-label="Очистить"><Cross /></MiniButton>;
const Open = () => <MiniButton type="button" aria-label="Открыть"><Lens /></MiniButton>;
const Drop = () => <MiniButton type="button" aria-label="Список"><Caret /></MiniButton>;

const Tool = ({ name, children }: { name: string; children: React.ReactNode }) => (
  <ToolButton type="button" aria-label={name}>{children}</ToolButton>
);

function LoadChart() {
  const base = 235;
  const step = 111.6;
  return (
    <svg width="812" height="256" viewBox="0 0 812 256" role="img" aria-label="Загрузка по дням" fontFamily={UI} fontSize="11" fill={INK}>
      <path d={`M24.500 5v${base - 5}`} stroke="#a8a8a8" />
      {[0, 50, 100, 150, 200].map((v) => {
        const y = Math.round(base - v * 1.15) + 0.5;
        return (
          <g key={v}>
            <path d={`M21 ${y}h4`} stroke="#a8a8a8" />
            <text x="19" y={y + 4} textAnchor="end">{v}</text>
          </g>
        );
      })}
      {load.map((d, i) => {
        const x = Math.round(24 + i * step);
        const top = Math.round(base - d.potential * 1.15) + 1.5;
        return (
          <g key={d.day}>
            <rect x={x + 19.5} y={top} width="37" height={base + 0.5 - top} fill="#d02a36" stroke="#1c0a0c" />
            <text x={x + 37} y={top - 1} textAnchor="middle">{d.potential}</text>
            <text x={x + (d.booked === "0" ? 74 : 75)} y={base - 1} textAnchor="middle">{d.booked}</text>
            <text x={x + 56} y="254" textAnchor="middle">{d.day}</text>
            <path d={`M${Math.round(24 + (i + 1) * step) + 0.5} ${base}v5`} stroke="#a8a8a8" />
          </g>
        );
      })}
      <path d={`M24 ${base + 0.5}h782`} stroke="#a8a8a8" />
    </svg>
  );
}

function SlotCell({ row, h, m }: { row: number; h: string; m: string }) {
  const bg = slotBg(h, m);
  if (h === "12" && row === 0 && m === "00")
    return <Slot $bg={bg}><Booking $kind="done">{"ЗР АМ\nзаказ"}</Booking></Slot>;
  if (h === "12" && row === 2 && m === "15")
    return <ActiveSlot $bg={bg}><Booking $kind="active">Углы</Booking></ActiveSlot>;
  if (h === "12" && row === 2 && m === "30")
    return <Slot $bg={bg}><Booking $kind="plain">Регул</Booking></Slot>;
  return <Slot $bg={bg} />;
}

function RequestForm() {
  return (
    <Group>
      <Legend>Заявка на ремонт</Legend>
      <Row $gap={4}>
        <Label $w={75} htmlFor="client">Клиент:</Label>
        <Field $w={277} $mr={3}><Input id="client" defaultValue="Кузин Иван Александрович" /><More /><Open /></Field>
        <RaisedButton type="button" $w={22} $h={19} aria-label="Новый клиент"><UserAdd /></RaisedButton>
      </Row>
      <Row $gap={4}>
        <Label $w={75} htmlFor="phone">Телефон:</Label>
        <Field $w={277}><Input id="phone" defaultValue="+7 (916) 4445566" /><Drop /><More /><Clear /></Field>
      </Row>
      <Row $gap={4}>
        <Label $w={75} htmlFor="car">Автомобиль:</Label>
        <Field $w={147} $mr={24}><Input id="car" defaultValue="BMW, 3 (E46) Синий №" /><More /><Clear /></Field>
        <Label $w={38} htmlFor="plate">Гос. №</Label>
        <Field><Input id="plate" defaultValue="М800УР750" /><Clear /></Field>
      </Row>
      <Row $gap={4}>
        <Label $w={75} $link $double htmlFor="campaign">Сервисная кампания:</Label>
        <Field $w={161} $mr={10}><Input id="campaign" /><More /><Clear /></Field>
        <Label $w={38} htmlFor="mileage">Пробег</Label>
        <Field><Input id="mileage" $right defaultValue="467 890" /></Field>
      </Row>
      <InfoBox>
        <InfoTable>
          <tbody>
            {info.map(([k, v]) => <tr key={k}><th scope="row">{k}</th><td>{v}</td></tr>)}
          </tbody>
        </InfoTable>
        <Scroll $w={17}>
          <ScrollArrow type="button" $h={21} aria-label="Вверх"><Tri up /></ScrollArrow>
          <ScrollThumb />
          <ScrollGap />
          <ScrollArrow type="button" $h={21} aria-label="Вниз"><Tri /></ScrollArrow>
        </Scroll>
      </InfoBox>
      <Row $gap={1}>
        <Field $h={21}>
          <Input $blue readOnly aria-label="Реквизиты" value="ИП Кузнецов А.А.; Автосервис ИП; Кузнецов Сергей Александр...; Сорокин" />
          <More />
        </Field>
      </Row>
      <Row $gap={1}>
        <Label $w={75} htmlFor="kind">Вид ремонта:</Label>
        <Field><Select id="kind"><option>1. Текущий ремонт</option></Select><Drop /></Field>
      </Row>
      <Row $gap={1}>
        <Label $w={75} htmlFor="shop">Цех:</Label>
        <Field><Input id="shop" defaultValue="Основной цех" /><More /><Clear /></Field>
      </Row>
      <Row $gap={1}>
        <Label $w={75} $double htmlFor="reason">Причина обращения:</Label>
        <Area id="reason" defaultValue="[2] Повышенная вибрация;" />
        <AreaButtons><More /><Open /></AreaButtons>
      </Row>
      <Row $gap={1}>
        <Label $w={75} htmlFor="dispatcher">Диспетчер:</Label>
        <Field><Input id="dispatcher" defaultValue="Администратор 5S" /><More /><Clear /><Open /></Field>
      </Row>
      <Row $gap={0}>
        <Label $w={75} htmlFor="master">Мастер:</Label>
        <Field><Input id="master" /><More /><Clear /><Open /></Field>
      </Row>
    </Group>
  );
}

function Planning() {
  return (
    <>
      <PlanTitle>{"Планирование работ    (по плану: 0,5 ч; по нор..."}</PlanTitle>
      <PlanBox>
        <PlanTools>
          <Tool name="Добавить"><PlusBall /></Tool>
          <Tool name="Скопировать"><PageAdd /></Tool>
          <Tool name="Изменить"><Pencil /></Tool>
          <Tool name="Удалить"><RedX /></Tool>
          <Tool name="Выше"><ArrowIcon dir="up" /></Tool>
          <Tool name="Ниже"><ArrowIcon dir="down" /></Tool>
          <Separator />
          <ToolButton type="button"><FillIcon />Заполнение <MenuCaret /></ToolButton>
          <Separator />
          <ToolButton type="button"><FillIcon pick />Подбор работ</ToolButton>
          <Tool name="Отметить"><Checks on /></Tool>
          <Tool name="Снять отметки"><Checks /></Tool>
        </PlanTools>
        <PlanTable>
          <colgroup>
            <col width="92" /><col width="24" /><col width="104" /><col width="108" /><col />
          </colgroup>
          <thead>
            <tr><th className="current" colSpan={2}>Авторабота</th><th>Рабочее место</th><th>Начало</th><th>План, ч</th></tr>
            <tr><th>Код</th><th>ЗЧ</th><th>Исполнитель</th><th>Конец</th><th>Норма, ч</th></tr>
          </thead>
          <tbody>
            <WorkRow $open><td colSpan={2}>Регулировка карда...</td><td>{"№05  2-х стоечны..."}</td><td>15.04.2024 <Marked>12:30:00</Marked></td><td className="num">0,25</td></WorkRow>
            <WorkRow><td colSpan={2} /><td /><td>15.04.2024 <Marked>12:45:00</Marked></td><td className="num">2,00</td></WorkRow>
            <WorkRow $selected><td colSpan={2}>Углы установки ко...</td><td>{"№05  2-х стоечны..."}</td><td>15.04.2024 <Marked>12:15:00</Marked></td><td className="num">0,25</td></WorkRow>
            <WorkRow $selected><td /><td /><td /><td>15.04.2024 <Marked>12:30:00</Marked></td><td className="num">1,60</td></WorkRow>
          </tbody>
        </PlanTable>
      </PlanBox>
      <Row $gap={0}>
        <Label $w={80} htmlFor="comment">Комментарий:</Label>
        <Field><Input id="comment" /><Clear /><Open /></Field>
      </Row>
    </>
  );
}

function ScheduleBoard() {
  return (
    <Board>
      <Sheet>
        <SheetView>
          <Schedule>
            <colgroup>
              <col width="29" /><col width="364" /><col width="26" />
              {slots.map(({ h, m }) => <col key={h + m} width={m === "45" ? 22 : 23} />)}
              <col width="92" />
            </colgroup>
            <thead>
              <tr>
                <td rowSpan={2} />
                <ShopHead rowSpan={2}>Цех</ShopHead>
                <ZoneCell rowSpan={2} />
                {hours.map((h) => <HourHead key={h} $bg={hourBg(h)} colSpan={4}>{h}</HourHead>)}
              </tr>
              <tr>
                {slots.map(({ h, m }) => <MinuteHead key={h + m} $bg={minuteBg(h, m)}>{m}</MinuteHead>)}
                <MinuteHead $bg="#fff" />
              </tr>
            </thead>
            <tbody>
              {shops.map(([name, color], row) => (
                <tr key={name}>
                  {row === 0 && (
                    <GutterCell rowSpan={11}>
                      <Fold>
                        <FoldButton type="button" aria-label="Свернуть"><svg width="7" height="1"><path d="M0 0h7v1H0z" /></svg></FoldButton>
                        <FoldLine $h={9} />
                      </Fold>
                    </GutterCell>
                  )}
                  <ShopCell scope="row" $bg={color}>{name}</ShopCell>
                  {row === 0 && <ZoneCell rowSpan={11}><ZoneText>16.04 вторник MSK+3 (UTC+6) - Омск</ZoneText></ZoneCell>}
                  {slots.map(({ h, m }) => <SlotCell key={h + m} row={row} h={h} m={m} />)}
                  <Slot $bg="#fff" />
                </tr>
              ))}
            </tbody>
          </Schedule>
          <Below>
            <BelowCell $w={29}><Fold><FoldLine /></Fold></BelowCell>
            <BelowCell $w={364} />
            <Key $bg="#fff">Служебные цвета</Key>
            <Key $bg="#ffb6c1">Состояние ремонта</Key>
          </Below>
        </SheetView>
        <Scroll $w={17}>
          <ScrollArrow type="button" $h={21} aria-label="Вверх"><Tri up faint /></ScrollArrow>
          <ScrollBody />
        </Scroll>
        <ZoneMark />
        <Arrows width="110" height="160" viewBox="0 0 110 160" aria-hidden="true">
          <path d="M50 2l23 10-6 3-3 8z" fill={RED} />
          <path d="M66 15l27 23" stroke={RED} strokeWidth="3" strokeDasharray="9 4" />
          <path d="M1 103l25 10-6 3-2 8z" fill={RED} />
          <path d="M20 117l51 37" stroke={RED} strokeWidth="3" strokeDasharray="9 4" />
        </Arrows>
        <Note $x={767} $y={155}>Время записи</Note>
        <Note $x={759} $y={271}>Текущее время</Note>
      </Sheet>
      <ChartPanel>
        <LoadChart />
        <Legends>
          <LegendItem $c="#d02a36">Потенциал,ч.</LegendItem>
          <LegendItem $c="#ffe000">Записано,ч.</LegendItem>
        </Legends>
      </ChartPanel>
      <HScroll><HPart $w={21} /><HPart $w={321} /><HPart $w={21} $auto /></HScroll>
    </Board>
  );
}

export default function App() {
  return (
    <Page>
      <GlobalStyle />
      <TopBar>
        <ClockCalendar />
        <Title>Запись на ремонт</Title>
        <Field $w={206} $h={20} $mr={2}><Input aria-label="Поиск" /><Drop /><Clear /></Field>
        <RaisedButton type="button" $w={23} $h={20} aria-label="Настройка списка"><ListGear /></RaisedButton>
        <Tools>
          <ToolButton type="button"><WrenchHand />Заявка №АМ90000002 <MenuCaret /></ToolButton>
          <Tool name="Очистить"><Broom /></Tool>
          <Separator />
          <ToolButton type="button"><RedX />Отказ</ToolButton>
          <Separator />
          <Tool name="Дерево"><Tree /></Tool>
          <Separator />
          <Tool name="Вырезать"><Scissors /></Tool>
          <Tool name="Копировать"><Copy /></Tool>
          <Tool name="Вставить"><Paste /></Tool>
          <Separator />
          <Tool name="Обновить сетку"><GridSync /></Tool>
          <Separator />
          <Tool name="Растянуть"><Stretch /></Tool>
          <Separator />
          <Tool name="Диаграмма"><Bars /></Tool>
          <Separator />
          <Tool name="Отбор"><FilterCog /></Tool>
          <Tool name="Снять отбор"><FilterX /></Tool>
          <Separator />
          <Tool name="Обновить"><Refresh /></Tool>
          <ToolButton type="button"><HammerWrench />Настройка для Администратора <MenuCaret /></ToolButton>
        </Tools>
        <RaisedButton type="button" $w={22} $h={20} aria-label="Справка"><Help /></RaisedButton>
      </TopBar>
      <NavBar>
        <ViewTabs>
          <ToolButton type="button" $on><Clip />Панель</ToolButton>
          <Separator />
          <ToolButton type="button"><MonthIcon />На месяц</ToolButton>
          <ToolButton type="button" $on><LiftIcon />По цехам</ToolButton>
          <ToolButton type="button"><StaffIcon />По исполнителям</ToolButton>
        </ViewTabs>
        <RaisedButton type="button" $w={23} $h={20} aria-label="Предыдущий день"><ArrowIcon dir="left" /></RaisedButton>
        <DateField>
          <DateInput aria-label="Дата" defaultValue="15.04.2024" />
          <MiniButton type="button" aria-label="Календарь"><Grid /></MiniButton>
        </DateField>
        <RaisedButton type="button" $w={23} $h={20} aria-label="Следующий день"><ArrowIcon dir="right" /></RaisedButton>
        <DocLink href="#"><DocStack />{" ЗР АМ90000002 от 05.04.2024 за..."}</DocLink>
        <Week>
          <Day $tone="#1f9a35">Сегодня<DayButton type="button">15.04</DayButton></Day>
          <RaisedButton type="button" $w={20} $h={17} aria-label="Неделя назад"><ArrowIcon dir="left" /></RaisedButton>
          {days.map(([d, n], i) => (
            <Day key={n} $tone={i > 3 ? "#a9a9a9" : undefined}>{d}<DayButton type="button">{n}</DayButton></Day>
          ))}
          <RaisedButton type="button" $w={20} $h={17} aria-label="Неделя вперед"><ArrowIcon dir="right" /></RaisedButton>
        </Week>
      </NavBar>
      <Main>
        <Side>
          <RequestForm />
          <Planning />
        </Side>
        <ScheduleBoard />
      </Main>
      <Footer>
        <BigButton type="button" $w={58} aria-label="Печать"><Printer /></BigButton>
        <Spacer />
        <BigButton type="button" $w={140} $mr={1}><IdCard />Клиенты и авто</BigButton>
        <BigButton type="button" $w={100} $mr={1}><Cart />Корзина</BigButton>
        <BigButton type="button" $w={128} $mr={3}><Car />Машинозаезд</BigButton>
        <BigButton type="button" $w={58} aria-label="Открыть папку"><FolderUp /></BigButton>
        <BigButton type="button" $w={57} aria-label="Сохранить и закрыть"><Floppy go /></BigButton>
        <BigButton type="button" $w={58} $mr={3} aria-label="Сохранить"><Floppy /></BigButton>
        <BigButton type="button" $w={58} aria-label="Закрыть"><BigX /></BigButton>
      </Footer>
    </Page>
  );
}
